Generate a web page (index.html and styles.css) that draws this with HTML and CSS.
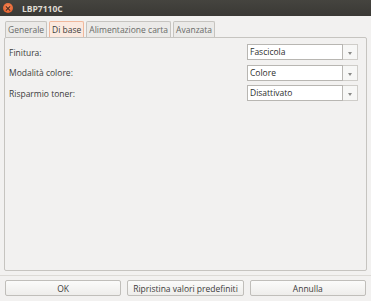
FILE: index.html
```html
<!DOCTYPE html>
<html lang="it">
<head>
    <meta charset="UTF-8">
    <title>LBP7110C</title>
    <link rel="stylesheet" href="styles.css">
</head>
<body>
    <div class="window">
        <div class="titlebar">
            <span class="close-btn"></span>
            <span class="title">LBP7110C</span>
        </div>

        <div class="tabs">
            <div class="tab">Generale</div>
            <div class="tab active">Di base</div>
            <div class="tab">Alimentazione carta</div>
            <div class="tab">Avanzata</div>
        </div>

        <div class="panel">
            <div class="row">
                <span class="label">Finitura:</span>
                <div class="combo">
                    <span class="combo-text">Fascicola</span>
                    <span class="combo-arrow"></span>
                </div>
            </div>
            <div class="row">
                <span class="label">Modalità colore:</span>
                <div class="combo">
                    <span class="combo-text">Colore</span>
                    <span class="combo-arrow"></span>
                </div>
            </div>
            <div class="row">
                <span class="label">Risparmio toner:</span>
                <div class="combo">
                    <span class="combo-text">Disattivato</span>
                    <span class="combo-arrow"></span>
                </div>
            </div>
        </div>

        <div class="separator"></div>

        <div class="button-row">
            <button class="button">OK</button>
            <button class="button">Ripristina valori predefiniti</button>
            <button class="button">Annulla</button>
        </div>
    </div>
</body>
</html>
```

FILE: styles.css
```css
:root {
    --background: #f2f1f0;
    --foreground: #3c3c3c;
    --border: #c6c4c0;
    --titlebar: #3c3b37;
    --accent: #f07746;
}

body {
    margin: 0;
    font-family: "Open Sans", "DejaVu Sans", sans-serif;
    font-size: 8.5px;
    color: var(--foreground);
    background: var(--background);
}

.window {
    width: 371px;
    height: 301px;
    display: flex;
    flex-direction: column;
    background: var(--background);
    overflow: hidden;
}

.titlebar {
    height: 16px;
    display: flex;
    align-items: center;
    gap: 9px;
    padding-left: 3px;
    background: linear-gradient(#45443f, #3a3935);
    color: #dfdbd2;
    font-weight: bold;
    font-size: 8.5px;
}

.close-btn {
    width: 10px;
    height: 10px;
    border-radius: 50%;
    background: radial-gradient(circle at 50% 40%, #f48a5a, #e0531f);
    position: relative;
}

.close-btn::before,
.close-btn::after {
    content: "";
    position: absolute;
    left: 2px;
    top: 4.5px;
    width: 6px;
    height: 1px;
    background: #4a2c20;
    transform: rotate(45deg);
}

.close-btn::after {
    transform: rotate(-45deg);
}

.tabs {
    display: flex;
    gap: 2px;
    padding: 5px 0 0 5px;
    height: 16px;
}

.tab {
    padding: 0 2px;
    height: 15px;
    line-height: 15px;
    border: 1px solid var(--border);
    border-bottom: none;
    border-radius: 2px 2px 0 0;
    color: #6a6a68;
    background: #ebeae8;
}

.tab.active {
    color: var(--foreground);
    background: #fbe9df;
    border-color: #f0b89c;
}

.panel {
    margin: 0 4px;
    height: 234px;
    border: 1px solid var(--border);
    border-radius: 2px;
    padding: 6px 0 0 4px;
    box-sizing: border-box;
    display: flex;
    flex-direction: column;
    gap: 4.5px;
}

.row {
    display: flex;
    align-items: center;
    justify-content: space-between;
    padding-right: 8px;
    height: 16px;
}

.combo {
    display: flex;
    width: 111px;
    height: 16px;
}

.combo-text {
    flex: 1;
    border: 1px solid #b8b6b2;
    background: #fff;
    padding-left: 2px;
    line-height: 14px;
    color: #2e2e2e;
}

.combo-arrow {
    width: 14px;
    border: 1px solid #cfcdc9;
    border-left: none;
    background: #f7f7f6;
    position: relative;
}

.combo-arrow::after {
    content: "";
    position: absolute;
    left: 5px;
    top: 7px;
    border-left: 2.5px solid transparent;
    border-right: 2.5px solid transparent;
    border-top: 3px solid #8a8a88;
}

.separator {
    margin-top: 4px;
    height: 1px;
    background: #dcdad6;
}

.button-row {
    display: flex;
    gap: 6px;
    padding: 4px 5px 0 5px;
}

.button {
    flex: 1;
    height: 16px;
    padding: 0;
    font-family: inherit;
    font-size: 8.5px;
    color: var(--foreground);
    border: 1px solid #c0beba;
    border-radius: 2px;
    background: linear-gradient(#fbfbfa, #eeedeb);
}
```
